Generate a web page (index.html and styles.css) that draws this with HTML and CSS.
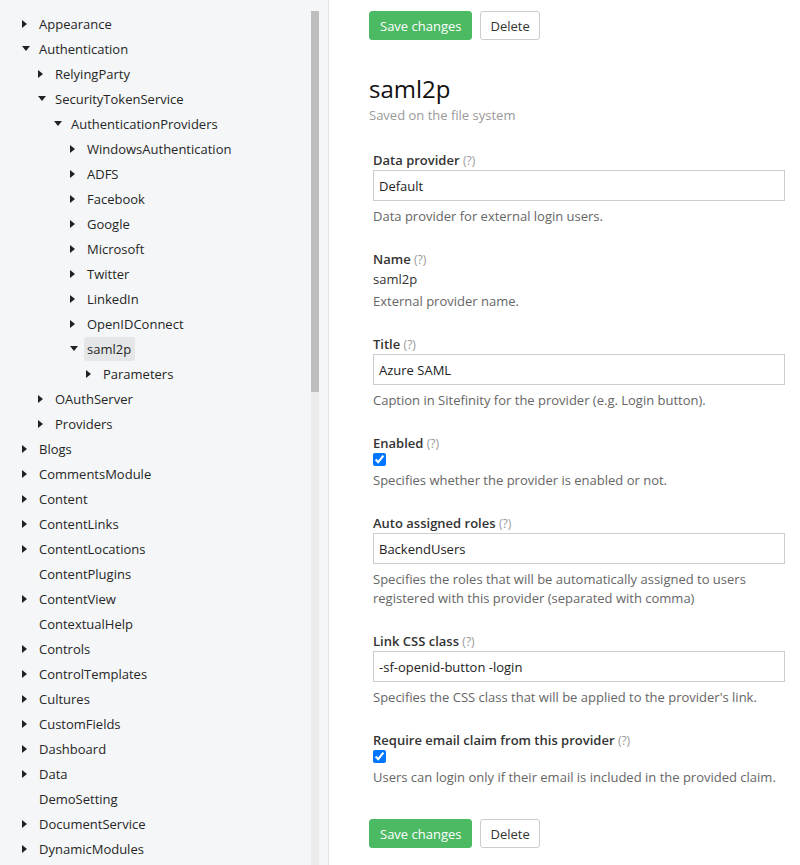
FILE: index.html
```html
<!DOCTYPE html>
<html>
<head>
<meta charset="utf-8">
<link rel="stylesheet" href="styles.css">
</head>
<body>
<div class="page">
  <aside class="sidebar">
    <ul class="tree">
      <li class="node l0"><span class="caret right"></span><span class="lbl">Appearance</span></li>
      <li class="node l0"><span class="caret down"></span><span class="lbl">Authentication</span></li>
      <li class="node l1"><span class="caret right"></span><span class="lbl">RelyingParty</span></li>
      <li class="node l1"><span class="caret down"></span><span class="lbl">SecurityTokenService</span></li>
      <li class="node l2"><span class="caret down"></span><span class="lbl">AuthenticationProviders</span></li>
      <li class="node l3"><span class="caret right"></span><span class="lbl">WindowsAuthentication</span></li>
      <li class="node l3"><span class="caret right"></span><span class="lbl">ADFS</span></li>
      <li class="node l3"><span class="caret right"></span><span class="lbl">Facebook</span></li>
      <li class="node l3"><span class="caret right"></span><span class="lbl">Google</span></li>
      <li class="node l3"><span class="caret right"></span><span class="lbl">Microsoft</span></li>
      <li class="node l3"><span class="caret right"></span><span class="lbl">Twitter</span></li>
      <li class="node l3"><span class="caret right"></span><span class="lbl">LinkedIn</span></li>
      <li class="node l3"><span class="caret right"></span><span class="lbl">OpenIDConnect</span></li>
      <li class="node l3"><span class="caret down"></span><span class="lbl selected">saml2p</span></li>
      <li class="node l4"><span class="caret right"></span><span class="lbl">Parameters</span></li>
      <li class="node l1"><span class="caret right"></span><span class="lbl">OAuthServer</span></li>
      <li class="node l1"><span class="caret right"></span><span class="lbl">Providers</span></li>
      <li class="node l0"><span class="caret right"></span><span class="lbl">Blogs</span></li>
      <li class="node l0"><span class="caret right"></span><span class="lbl">CommentsModule</span></li>
      <li class="node l0"><span class="caret right"></span><span class="lbl">Content</span></li>
      <li class="node l0"><span class="caret right"></span><span class="lbl">ContentLinks</span></li>
      <li class="node l0"><span class="caret right"></span><span class="lbl">ContentLocations</span></li>
      <li class="node l0"><span class="caret"></span><span class="lbl">ContentPlugins</span></li>
      <li class="node l0"><span class="caret right"></span><span class="lbl">ContentView</span></li>
      <li class="node l0"><span class="caret"></span><span class="lbl">ContextualHelp</span></li>
      <li class="node l0"><span class="caret right"></span><span class="lbl">Controls</span></li>
      <li class="node l0"><span class="caret right"></span><span class="lbl">ControlTemplates</span></li>
      <li class="node l0"><span class="caret right"></span><span class="lbl">Cultures</span></li>
      <li class="node l0"><span class="caret right"></span><span class="lbl">CustomFields</span></li>
      <li class="node l0"><span class="caret right"></span><span class="lbl">Dashboard</span></li>
      <li class="node l0"><span class="caret right"></span><span class="lbl">Data</span></li>
      <li class="node l0"><span class="caret"></span><span class="lbl">DemoSetting</span></li>
      <li class="node l0"><span class="caret right"></span><span class="lbl">DocumentService</span></li>
      <li class="node l0"><span class="caret right"></span><span class="lbl">DynamicModules</span></li>
    </ul>
    <div class="scroll-track"><div class="scroll-thumb"></div></div>
  </aside>

  <main class="content">
    <div class="actions">
      <button class="btn btn-save">Save changes</button>
      <button class="btn btn-delete">Delete</button>
    </div>

    <h1 class="title">saml2p</h1>
    <div class="subtitle">Saved on the file system</div>

    <form class="form">
      <div class="group">
        <label class="label">Data provider <span class="help">(?)</span></label>
        <input class="input" type="text" value="Default">
        <div class="desc">Data provider for external login users.</div>
      </div>

      <div class="group">
        <label class="label">Name <span class="help">(?)</span></label>
        <div class="value">saml2p</div>
        <div class="desc desc-value">External provider name.</div>
      </div>

      <div class="group">
        <label class="label">Title <span class="help">(?)</span></label>
        <input class="input" type="text" value="Azure SAML">
        <div class="desc">Caption in Sitefinity for the provider (e.g. Login button).</div>
      </div>

      <div class="group">
        <label class="label">Enabled <span class="help">(?)</span></label>
        <input class="check" type="checkbox" checked>
        <div class="desc desc-check">Specifies whether the provider is enabled or not.</div>
      </div>

      <div class="group">
        <label class="label">Auto assigned roles <span class="help">(?)</span></label>
        <input class="input" type="text" value="BackendUsers">
        <div class="desc">Specifies the roles that will be automatically assigned to users registered with this provider (separated with comma)</div>
      </div>

      <div class="group">
        <label class="label">Link CSS class <span class="help">(?)</span></label>
        <input class="input" type="text" value="-sf-openid-button -login">
        <div class="desc">Specifies the CSS class that will be applied to the provider's link.</div>
      </div>

      <div class="group last">
        <label class="label">Require email claim from this provider <span class="help">(?)</span></label>
        <input class="check" type="checkbox" checked>
        <div class="desc desc-check">Users can login only if their email is included in the provided claim.</div>
      </div>
    </form>

    <div class="actions bottom">
      <button class="btn btn-save">Save changes</button>
      <button class="btn btn-delete">Delete</button>
    </div>
  </main>
</div>
</body>
</html>
```

FILE: styles.css
```css
* { box-sizing: border-box; }

html, body {
  margin: 0;
  padding: 0;
}

body {
  font-family: "Open Sans", "Noto Sans", sans-serif;
  font-size: 13px;
  color: #333;
  background: #fff;
}

.page {
  display: flex;
  height: 865px;
  overflow: hidden;
}

/* ---------- sidebar ---------- */
.sidebar {
  width: 329px;
  flex: 0 0 329px;
  background: #f5f6f8;
  border-right: 1px solid #e2e3e5;
  display: flex;
  height: 100%;
}

.tree {
  list-style: none;
  margin: 0;
  padding: 11px 0 0 0;
  flex: 1;
  overflow: hidden;
}

.node {
  height: 25px;
  display: flex;
  align-items: center;
  white-space: nowrap;
  color: #262626;
}

.l0 { padding-left: 22px; }
.l1 { padding-left: 38px; }
.l2 { padding-left: 54px; }
.l3 { padding-left: 70px; }
.l4 { padding-left: 86px; }

.caret {
  width: 17px;
  flex: 0 0 17px;
  height: 10px;
  position: relative;
}

.caret.right::before {
  content: "";
  position: absolute;
  left: 0;
  top: 1px;
  border-left: 5px solid #222;
  border-top: 4px solid transparent;
  border-bottom: 4px solid transparent;
}

.caret.down::before {
  content: "";
  position: absolute;
  left: 0;
  top: 2px;
  border-top: 5px solid #222;
  border-left: 4.5px solid transparent;
  border-right: 4.5px solid transparent;
}

.lbl {
  line-height: 24px;
}

.lbl.selected {
  background: #e5e6e8;
  border-radius: 3px;
  padding: 0 4px 0 3px;
  margin-left: -3px;
}

.scroll-track {
  width: 8px;
  flex: 0 0 8px;
  margin-top: 11px;
  margin-right: 9px;
  background: #ebebeb;
}

.scroll-thumb {
  height: 381px;
  background: #bdbdbd;
}

/* ---------- content ---------- */
.content {
  flex: 1;
  padding: 11px 15px 0 40px;
}

.actions {
  display: flex;
  gap: 8px;
}

.actions.bottom {
  margin-top: 32px;
}

.btn {
  font-family: "Open Sans", "Noto Sans", sans-serif;
  font-size: 13px;
  height: 29px;
  padding: 0 10px;
  border-radius: 3px;
  cursor: pointer;
}

.btn-save {
  background: #4cb963;
  border: 1px solid #4cb963;
  color: #fff;
}

.btn-delete {
  background: #fff;
  border: 1px solid #ccc;
  color: #333;
  padding: 0 9px;
}

.title {
  margin: 34px 0 0 0;
  font-size: 24px;
  font-weight: 400;
  line-height: 30px;
  color: #111;
}

.subtitle {
  margin-top: 2px;
  line-height: 19px;
  color: #999;
}

.form {
  margin-top: 25px;
  padding-left: 4px;
}

.group {
  display: flex;
  flex-direction: column;
  align-items: flex-start;
  margin-bottom: 23px;
}

.group.last { margin-bottom: 0; }

.label {
  display: block;
  height: 20px;
  line-height: 20px;
  font-weight: 600;
  color: #333;
  white-space: nowrap;
}

.help {
  font-weight: 400;
  color: #999;
  font-size: 12px;
  line-height: 1;
  vertical-align: baseline;
}

.input {
  width: 100%;
  height: 31px;
  border: 1px solid #ccc;
  padding: 0 5px;
  font-family: "Open Sans", "Noto Sans", sans-serif;
  font-size: 13px;
  color: #222;
  background: #fff;
  margin: 0;
}

.value {
  height: 20px;
  line-height: 20px;
  color: #333;
}

.check {
  margin: 0;
  width: 13px;
  height: 13px;
}

.desc {
  margin-top: 6px;
  line-height: 19px;
  color: #666;
}

.desc.desc-value { margin-top: 3px; }
.desc.desc-check { margin-top: 5px; }
```
